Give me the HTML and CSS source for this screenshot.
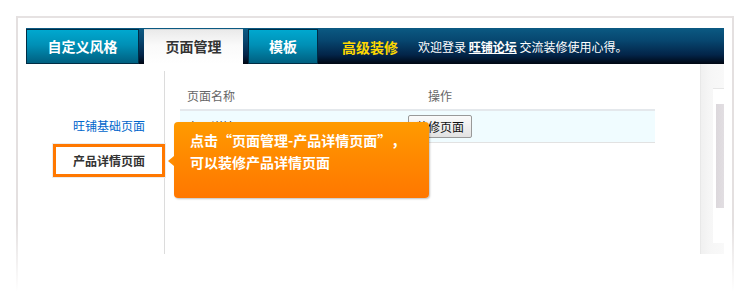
FILE: index.html
```html
<!DOCTYPE html>
<html lang="zh-CN">
<head>
<meta charset="utf-8">
<title>页面管理</title>
<link rel="stylesheet" href="styles.css">
</head>
<body>
<div class="panel">
  <div class="nav">
    <a class="tab tab-blue tab-1">自定义风格</a>
    <a class="tab tab-active tab-2">页面管理</a>
    <a class="tab tab-blue tab-3">模板</a>
    <span class="adv">高级装修</span>
    <span class="welcome">欢迎登录 <a class="forum">旺铺论坛</a> 交流装修使用心得。</span>
  </div>
  <div class="body">
    <div class="side">
      <a class="side-item side-link">旺铺基础页面</a>
      <a class="side-item side-current">产品详情页面</a>
    </div>
    <div class="main">
      <table class="pages">
        <thead>
          <tr><th class="col-name">页面名称</th><th class="col-op">操作</th></tr>
        </thead>
        <tbody>
          <tr><td class="cell-name">产品详情</td><td class="cell-op"><button class="btn">装修页面</button></td></tr>
        </tbody>
      </table>
      <div class="tip">点击<span class="q q-open">“</span>页面管理-产品详情页面<span class="q q-close">”</span>，<br>可以装修产品详情页面</div>
    </div>
    <div class="scroll">
      <div class="scroll-track"><div class="scroll-thumb"></div></div>
    </div>
  </div>
</div>
</body>
</html>
```

FILE: styles.css
```css
* { box-sizing: border-box; }
html, body { margin: 0; padding: 0; background: #fff; }
body {
  font-family: "Noto Sans CJK SC", "DejaVu Sans", sans-serif;
  font-size: 12px;
  color: #333;
}
.panel {
  position: relative;
  margin: 16px 0 0 16px;
  width: 718px;
  height: 276px;
  padding: 10px 10px 0 10px;
  border-top: 2px solid #e6e2e2;
}
.panel::before, .panel::after {
  content: "";
  position: absolute;
  top: -2px;
  bottom: 0;
  width: 2px;
  background: linear-gradient(#e4e0e0 0%, #e4e0e0 75%, rgba(228,224,224,0) 100%);
}
.panel::before { left: 0; }
.panel::after { right: 0; }

.nav {
  display: flex;
  align-items: flex-end;
  height: 36px;
  width: 698px;
  padding-top: 1px;
  background: linear-gradient(180deg, #0b5a83 0%, #07466f 35%, #032448 75%, #000612 100%);
}
.tab {
  display: block;
  height: 35px;
  line-height: 33px;
  text-align: center;
  font-size: 14px;
  font-weight: bold;
  margin-right: 5px;
}
.tab-blue {
  color: #fff;
  border: 1px solid #002c44;
  background: linear-gradient(180deg, #00a8cf 0%, #0090b6 45%, #005f80 100%);
}
.tab-active {
  color: #333;
  background: linear-gradient(180deg, #eaeaea 0%, #fafafa 45%, #fff 100%);
  border-top: 1px solid #d8d8d8;
}
.tab-1 { width: 113px; }
.tab-2 { width: 99px; }
.tab-3 { width: 70px; margin-right: 0; }
.adv {
  margin-left: 24px;
  color: #ffd800;
  font-size: 14px;
  font-weight: bold;
  line-height: 34px;
}
.welcome {
  margin-left: 20px;
  color: #fff;
  line-height: 34px;
}
.forum {
  color: #fff;
  font-weight: bold;
  text-decoration: underline;
}

.body {
  display: flex;
  height: 190px;
  width: 698px;
}
.side {
  width: 139px;
  flex: none;
  background-image: linear-gradient(#dcdcdc, #dcdcdc);
  background-size: 1px calc(100% - 7px);
  background-position: right bottom;
  background-repeat: no-repeat;
  padding: 50px 0 0 27px;
}
.side-item {
  display: block;
  width: 112px;
  text-align: center;
}
.side-link {
  color: #0066cc;
  height: 24px;
  line-height: 24px;
  margin-bottom: 6px;
}
.side-current {
  height: 33px;
  line-height: 27px;
  border: 3px solid #ff7800;
  background: #fff;
  color: #333;
  font-weight: bold;
  box-shadow: 0 0 0 1px #ececec;
}

.main {
  position: relative;
  flex: 1;
}
.pages {
  border-collapse: collapse;
  margin: 17px 0 0 15px;
  width: 475px;
  color: #666;
}
.pages th {
  font-weight: normal;
  text-align: left;
  height: 29px;
  padding: 0;
  border-bottom: 2px solid #e4e8ec;
}
.col-name { width: 228px; padding-left: 7px !important; }
.col-op { padding-left: 20px !important; }
.pages td {
  height: 32px;
  padding: 0;
  background: #f0fcff;
  border-bottom: 1px solid #e2e2e2;
}
.cell-name { padding-left: 7px !important; color: #333; }
.btn {
  width: 64px;
  height: 23px;
  padding: 0;
  font-family: inherit;
  font-size: 12px;
  color: #111;
  border: 1px solid #999;
  border-radius: 2px;
  background: linear-gradient(#fbfbfb, #e2e2e2);
}

.tip {
  position: absolute;
  left: 9px;
  top: 58px;
  width: 255px;
  height: 76px;
  padding: 7px 0 0 16px;
  border-radius: 4px;
  background: linear-gradient(180deg, #ff9b00 0%, #ff8800 50%, #ff7700 100%);
  box-shadow: 1px 1px 2px rgba(0,0,0,0.25);
  color: #fff;
  font-size: 14px;
  font-weight: bold;
  line-height: 22px;
  white-space: nowrap;
}
.q {
  display: inline-block;
  width: 14px;
}
.q-open { text-align: right; }
.q-close { text-align: left; }
.tip::before {
  content: "";
  position: absolute;
  left: -6px;
  top: 34px;
  border-top: 5px solid transparent;
  border-bottom: 5px solid transparent;
  border-right: 6px solid #ff8c00;
}

.scroll {
  width: 24px;
  flex: none;
  border-left: 1px solid #e8e8e8;
  background: linear-gradient(90deg, #f0f0f0 0%, #f6f6f6 40%, #f9f9f9 100%);
  padding: 24px 0 0 12px;
}
.scroll-track {
  width: 11px;
  height: 155px;
  background: #fff;
  border-top: 1px solid #e6e6e6;
  padding: 15px 0 0 3px;
}
.scroll-thumb {
  width: 8px;
  height: 104px;
  background: linear-gradient(90deg, #dcd8dc, #e2dee2);
}
```
